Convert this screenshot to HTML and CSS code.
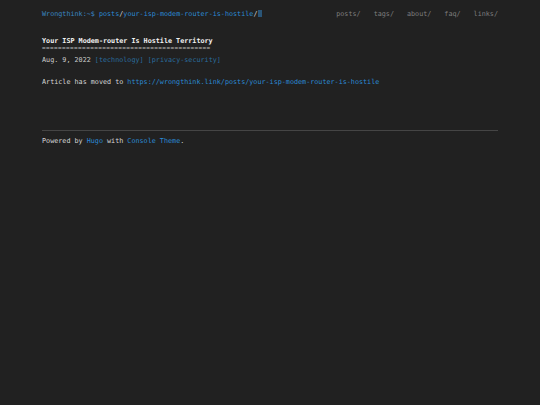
FILE: index.html
```html
<!DOCTYPE html>
<html lang="en">
<head>
<meta charset="utf-8">
<title>Your ISP Modem-router Is Hostile Territory</title>
<link rel="stylesheet" href="styles.css">
</head>
<body>
<div class="container">
  <header class="header">
    <div class="prompt"><a class="home" href="#">Wrongthink:~$</a> <a class="crumb" href="#">posts</a>/<a class="crumb" href="#">your-isp-modem-router-is-hostile</a>/<span class="cursor"></span></div>
    <nav class="nav">
      <a href="#">posts/</a>
      <a href="#">tags/</a>
      <a href="#">about/</a>
      <a href="#">faq/</a>
      <a href="#">links/</a>
    </nav>
  </header>
  <main class="main">
    <h1 class="title">Your ISP Modem-router Is Hostile Territory</h1>
    <div class="underline">==========================================</div>
    <div class="meta">Aug. 9, 2022 <a class="tag" href="#">[technology]</a> <a class="tag" href="#">[privacy-security]</a></div>
    <p class="body">Article has moved to <a class="link" href="#">https://wrongthink.link/posts/your-isp-modem-router-is-hostile</a></p>
  </main>
  <footer class="footer">
    <div class="footer-text">Powered by <a class="link" href="#">Hugo</a> with <a class="link" href="#">Console Theme</a>.</div>
  </footer>
</div>
</body>
</html>
```
FILE: styles.css
```css
html, body {
  margin: 0;
  padding: 0;
  background: #212121;
}
body {
  font-family: "DejaVu Sans Mono", "Liberation Mono", monospace;
  font-size: 6.75px;
  color: #d6d6d6;
}
a {
  text-decoration: none;
}
.container {
  width: 456px;
  margin: 0 auto;
  padding-top: 9px;
}
.header {
  display: flex;
  justify-content: space-between;
  line-height: 10px;
  height: 10px;
}
.prompt {
  color: #d6d6d6;
  white-space: nowrap;
}
.home {
  color: #3a86c2;
}
.crumb {
  color: #2b8ad4;
}
.cursor {
  display: inline-block;
  width: 4px;
  height: 7px;
  background: #2a5577;
  margin-left: 1px;
  vertical-align: -1px;
}
.nav {
  display: flex;
  gap: 13px;
}
.nav a {
  color: #7e7e7e;
}
.main {
  padding-top: 18px;
}
.title {
  margin: 0;
  font-size: 6.75px;
  font-weight: bold;
  color: #f2f2f2;
  line-height: 8px;
}
.underline {
  color: #bdbdbd;
  font-size: 6px;
  letter-spacing: 0.4px;
  line-height: 6px;
  white-space: nowrap;
}
.meta {
  margin-top: 4px;
  line-height: 10px;
  color: #cfcfcf;
}
.tag {
  color: #2a6c9e;
}
.body {
  margin: 12px 0 0;
  line-height: 10px;
  color: #d6d6d6;
}
.link {
  color: #2b8ad4;
}
.footer {
  margin-top: 43px;
  border-top: 1px solid #454545;
  padding-top: 5px;
}
.footer-text {
  line-height: 10px;
  color: #d6d6d6;
}
```
